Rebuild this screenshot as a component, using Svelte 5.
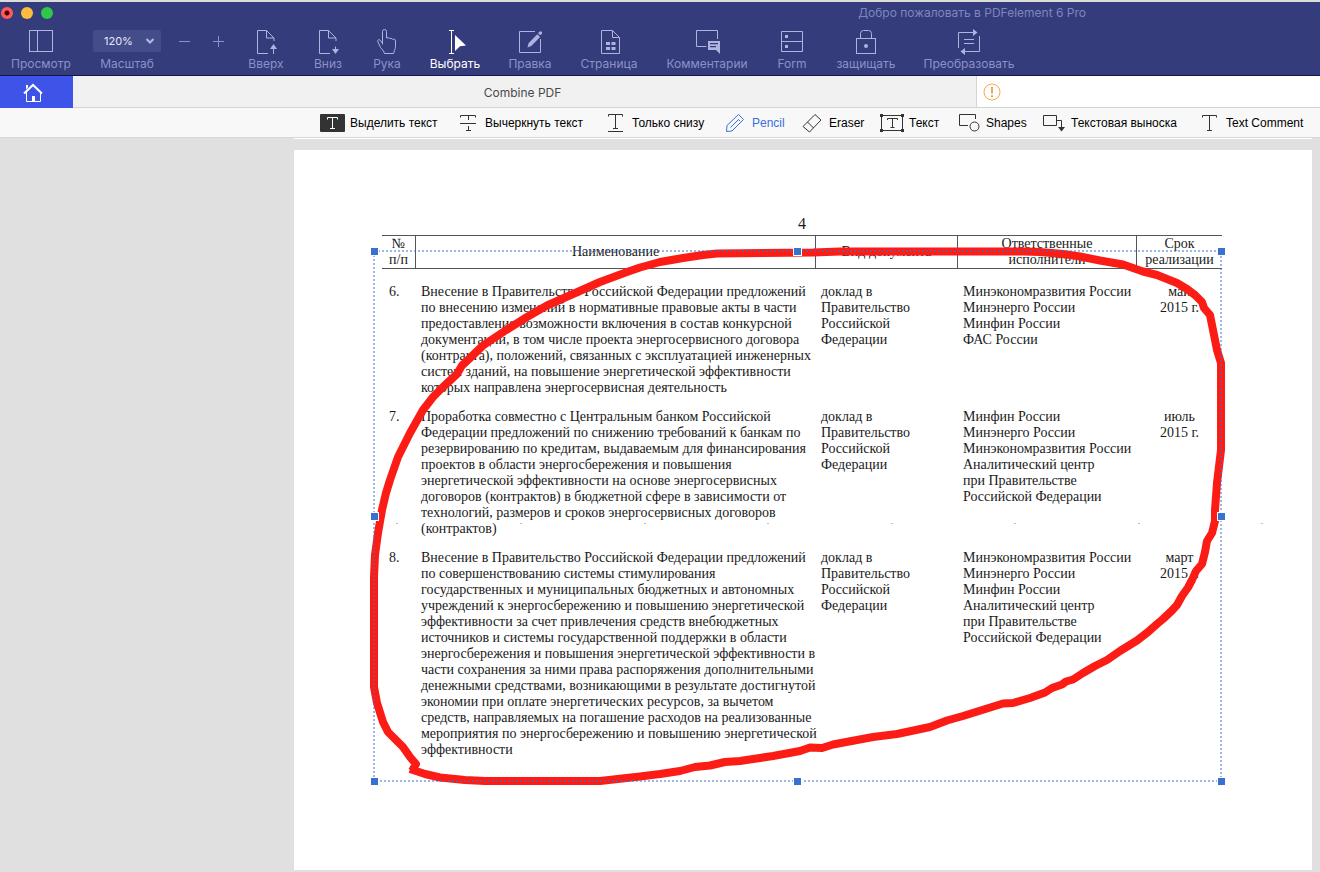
<script>
  const tools = [
    { id: 'up', label: 'Вверх' },
    { id: 'down', label: 'Вниз' },
    { id: 'hand', label: 'Рука' },
    { id: 'select', label: 'Выбрать' },
    { id: 'edit', label: 'Правка' },
    { id: 'page', label: 'Страница' },
    { id: 'comment', label: 'Комментарии' },
    { id: 'form', label: 'Form' },
    { id: 'protect', label: 'защищать' },
    { id: 'convert', label: 'Преобразовать' },
  ];

  const markups = [
    { id: 'highlight', label: 'Выделить текст' },
    { id: 'strike', label: 'Вычеркнуть текст' },
    { id: 'underline', label: 'Только снизу' },
    { id: 'pencil', label: 'Pencil' },
    { id: 'eraser', label: 'Eraser' },
    { id: 'textbox', label: 'Текст' },
    { id: 'shapes', label: 'Shapes' },
    { id: 'callout', label: 'Текстовая выноска' },
    { id: 'text', label: 'Text Comment' },
  ];

  const report = ['доклад в', 'Правительство', 'Российской', 'Федерации'];

  const rows = [
    {
      num: '6.',
      name: [
        'Внесение в Правительство Российской Федерации предложений',
        'по внесению изменений в нормативные правовые акты в части',
        'предоставления возможности включения в состав конкурсной',
        'документации, в том числе проекта энергосервисного договора',
        '(контракта), положений, связанных с эксплуатацией инженерных',
        'систем зданий, на повышение энергетической эффективности',
        'которых направлена энергосервисная деятельность',
      ],
      owners: ['Минэкономразвития России', 'Минэнерго России', 'Минфин России', 'ФАС России'],
      due: ['май', '2015 г.'],
    },
    {
      num: '7.',
      name: [
        'Проработка совместно с Центральным банком Российской',
        'Федерации предложений по снижению требований к банкам по',
        'резервированию по кредитам, выдаваемым для финансирования',
        'проектов в области энергосбережения и повышения',
        'энергетической эффективности на основе энергосервисных',
        'договоров (контрактов) в бюджетной сфере в зависимости от',
        'технологий, размеров и сроков энергосервисных договоров',
        '(контрактов)',
      ],
      owners: [
        'Минфин России',
        'Минэнерго России',
        'Минэкономразвития России',
        'Аналитический центр',
        'при Правительстве',
        'Российской Федерации',
      ],
      due: ['июль', '2015 г.'],
    },
    {
      num: '8.',
      name: [
        'Внесение в Правительство Российской Федерации предложений',
        'по совершенствованию системы стимулирования',
        'государственных и муниципальных бюджетных и автономных',
        'учреждений к энергосбережению и повышению энергетической',
        'эффективности за счет привлечения средств внебюджетных',
        'источников и системы государственной поддержки в области',
        'энергосбережения и повышения энергетической эффективности в',
        'части сохранения за ними права распоряжения дополнительными',
        'денежными средствами, возникающими в результате достигнутой',
        'экономии при оплате энергетических ресурсов, за вычетом',
        'средств, направляемых на погашение расходов на реализованные',
        'мероприятия по энергосбережению и повышению энергетической',
        'эффективности',
      ],
      owners: [
        'Минэкономразвития России',
        'Минэнерго России',
        'Минфин России',
        'Аналитический центр',
        'при Правительстве',
        'Российской Федерации',
      ],
      due: ['март', '2015 г.'],
    },
  ];

  // selection box of the pencil stroke, in page units
  const box = { x: 374, y: 251, w: 847, h: 530 };
  const handles = [
    [374, 251], [797, 251], [1221, 251],
    [374, 516], [1221, 516],
    [374, 781], [797, 781], [1221, 781],
  ];
  const specks = [397, 521, 645, 768, 892, 1015, 1139, 1262];

  let activeTool = $state('select');
  let activeMarkup = $state('pencil');
  let zoom = $state('120%');
</script>

{#snippet lines(list)}
  {#each list as line}<span class="line">{line}</span>{/each}
{/snippet}

{#snippet toolIcon(id)}
  <svg class="tool-icon" viewBox="0 0 28 28" aria-hidden="true">
    {#if id === 'view'}
      <rect x="2.5" y="3.5" width="23" height="21" />
      <path d="M10.5 3.5v21" />
    {:else if id === 'up'}
      <path d="M16 26.5H5.5v-23h9l7.500 7.500V14M14.500 3.500v7.500H22" />
      <path d="M21.500 20v7" />
      <path class="solid" d="M21.500 17l3.500 5h-7z" />
    {:else if id === 'down'}
      <path d="M16 26.5H5.5v-23h9l7.500 7.500V14M14.500 3.500v7.500H22" />
      <path d="M21.500 19.500v4" />
      <path class="solid" d="M21.500 27l3.500-5h-7z" />
    {:else if id === 'hand'}
      <path d="M9.500 17.500V4.500q0-2 2-2t2 2V11q1.500-1 3 .5 1.500-.8 3 .7 3-.7 3 1.800v5.500q0 2-1 4l-1 3H11.500l-1-2.500-3-3.500-2.500-5.500q-1-1.800.5-2.300 1.500-.3 2.300 1.300l1.700 2.500" />
    {:else if id === 'select'}
      <path d="M10.500 4v22M8 3.500h5M8 26.500h5" />
      <path class="solid" d="M14 8l11 10.500-6 .8-5 4.700z" />
    {:else if id === 'edit'}
      <path d="M19 4.500H3.500v21h21V12" />
      <path class="solid" d="M11.500 20.500l1-4.300 8.800-9 2.800 2.800-8.800 9zM22 6.300l1.500-1.500q1.200-1 2.200 0t.2 2l-1.500 1.500z" />
    {:else if id === 'page'}
      <path d="M6.500 3.500h11l7 7v16h-18zM17.500 3.500v7h7" />
      <path class="solid" d="M11 15h4v3h-4zM16.500 15h4v3h-4zM11 20h4v3h-4zM16.500 20h4v3h-4z" />
    {:else if id === 'comment'}
      <path d="M13.500 19.500h-10v-16h21V12" />
      <path class="solid" fill-rule="evenodd" d="M15 14h12v13l-4-4h-8zM17 16v1.300h8V16zM17 19v1.300h6V19z" />
    {:else if id === 'form'}
      <path d="M3.500 4.500h21v20h-21zM3.500 14.500h21" />
      <path class="solid" d="M7 8h3v3H7zM7 18h3v3H7z" />
    {:else if id === 'protect'}
      <rect x="4.500" y="11.500" width="19" height="15" />
      <path d="M8.500 11.500v-5q0-3 3-3h5q3 0 3 3v5" />
      <circle class="solid" cx="14" cy="19" r="2" />
    {:else if id === 'convert'}
      <path d="M3.500 21V5.500H19M24.500 9v15.500H9M9 12.500h10M9 16.500h10" />
      <path class="solid" d="M18 2l4.500 3.500L18 9zM10 21l-4.500 3.500L10 28z" />
    {/if}
  </svg>
{/snippet}

{#snippet markupIcon(id)}
  <svg class="markup-icon" viewBox="0 0 26 25" aria-hidden="true">
    {#if id === 'highlight'}
      <rect class="plate" x="0" y="4" width="25" height="18" rx="1" />
      <path class="on-plate" d="M7.500 9.500v-2h10v2M12.500 7.500v11M10 18.500h5" />
    {:else if id === 'strike'}
      <path d="M5.500 7.500v-2h15v2M13.500 5.500V10M5 13.500h16M13.500 16v4.500M11 20.500h5" />
    {:else if id === 'underline'}
      <path d="M6.500 6.500v-2h14v2M13.500 4.500v14M11 18.500h5M6 21.500h15" />
    {:else if id === 'pencil'}
      <path d="M4.500 21.500l.5-6L16.500 4.500l5 5L10 21zM8.500 17.500l8-8 1.500 1.500" />
    {:else if id === 'eraser'}
      <path d="M4 16.500L16 4.500l6 5.500L10.500 22zM8.500 12l6 6" />
    {:else if id === 'textbox'}
      <path d="M4 5.500h18M4 20.500h18M2.500 7v12M23.500 7v12" />
      <path class="solid" d="M1 4h3v3H1zM22 4h3v3h-3zM1 19h3v3H1zM22 19h3v3h-3z" />
      <path d="M8.500 10V8.500h10V10M13.500 8.500v9M11.500 17.500h4" />
    {:else if id === 'shapes'}
      <path d="M12 15.500H3.500v-11h16V9" />
      <circle cx="18.500" cy="16.500" r="4.500" />
    {:else if id === 'callout'}
      <path d="M2.500 5.500h13v10h-13zM15.500 10.500h5V17" />
      <path class="solid" d="M17 17h7l-3.500 4.500z" />
    {:else if id === 'text'}
      <path d="M6.500 7.500v-2h14v2M13.500 5.500v15M11 20.500h5" />
    {/if}
  </svg>
{/snippet}

<div class="app">
  <header class="chrome">
    <div class="titlebar">
      <div class="lights">
        <button class="light close" aria-label="Закрыть"></button>
        <button class="light minimize" aria-label="Свернуть"></button>
        <button class="light maximize" aria-label="Развернуть"></button>
      </div>
      <h1>Добро пожаловать в PDFelement 6 Pro</h1>
    </div>

    <div class="toolbar">
      <button class="tool">
        {@render toolIcon('view')}
        <span>Просмотр</span>
      </button>

      <div class="zoom">
        <div class="zoom-box">
          <select id="zoom" bind:value={zoom}>
            <option>100%</option>
            <option>120%</option>
            <option>150%</option>
          </select>
          <svg class="chevron" viewBox="0 0 10 8" aria-hidden="true"><path d="M1.500 2L5 5.500 8.500 2" /></svg>
        </div>
        <label for="zoom">Масштаб</label>
      </div>

      <div class="steps">
        <button aria-label="Уменьшить">
          <svg viewBox="0 0 11 11" aria-hidden="true"><path d="M0 5.500h11" /></svg>
        </button>
        <button aria-label="Увеличить">
          <svg viewBox="0 0 11 11" aria-hidden="true"><path d="M0 5.500h11M5.500 0v11" /></svg>
        </button>
      </div>

      <nav class="tools">
        {#each tools as tool}
          <button class="tool" class:active={activeTool === tool.id} onclick={() => (activeTool = tool.id)}>
            {@render toolIcon(tool.id)}
            <span>{tool.label}</span>
          </button>
        {/each}
      </nav>
    </div>
  </header>

  <div class="tabs">
    <button class="home" aria-label="Главная">
      <svg viewBox="0 0 20 20" aria-hidden="true">
        <path class="roof" d="M1 10.500l9-8.500 9 8.500" />
        <path d="M3.500 9v9.500h14V9" />
        <path class="solid" d="M9 13h3v6H9zM3 2h2v2.500l-2 2z" />
      </svg>
    </button>
    <button class="tab">Combine PDF</button>
    <div class="tab-alert">
      <svg viewBox="0 0 18 18" role="img" aria-label="Предупреждение">
        <circle cx="9" cy="9" r="8" />
        <path d="M9 4v6.500M9 12.300v1.700" />
      </svg>
    </div>
  </div>

  <div class="markup-bar">
    {#each markups as item}
      <button class="markup" class:current={activeMarkup === item.id} onclick={() => (activeMarkup = item.id)}>
        {@render markupIcon(item.id)}
        <span>{item.label}</span>
      </button>
    {/each}
  </div>

  <main class="workspace">
    <div class="page-end"></div>
    <article class="page">
      <div class="scan">
        <p class="page-number">4</p>
        <table>
          <colgroup>
            <col class="c-num" />
            <col class="c-name" />
            <col class="c-kind" />
            <col class="c-owner" />
            <col class="c-due" />
          </colgroup>
          <thead>
            <tr>
              <th>{@render lines(['№', 'п/п'])}</th>
              <th>Наименование</th>
              <th>Вид документа</th>
              <th>{@render lines(['Ответственные', 'исполнители'])}</th>
              <th>{@render lines(['Срок', 'реализации'])}</th>
            </tr>
          </thead>
          <tbody>
            {#each rows as row}
              <tr>
                <td class="num">{row.num}</td>
                <td>{@render lines(row.name)}</td>
                <td>{@render lines(report)}</td>
                <td>{@render lines(row.owners)}</td>
                <td class="due">{@render lines(row.due)}</td>
              </tr>
            {/each}
          </tbody>
        </table>

        <svg class="ink" viewBox="362 150 920 650" aria-hidden="true">
          {#each specks as x}
            <circle class="speck" cx={x} cy="523.500" r="0.600" />
          {/each}
          <path
            class="stroke"
            d="M410 769L425 774 440 777.500 465 780 485 781 600 781 640 776.500 660 774 680 771 695 767 710 765.500 725 762 740 761 773 756 800 751 810 747.500 822 748 833 744.500 873 737 897 734 930 727 947 720.500 963 716 987 708.500 1003 703.500 1013 703 1030 698 1045 692.500 1052 688 1062 684.500 1066 681.500 1073 679.500 1083 673 1095 666 1107 660 1120 651 1137 640.500 1148 632 1157 624 1163 619 1172 610.500 1177 605 1182 596 1188 587.500 1192 580 1196 571 1202 564 1205 552 1207 541 1212 533 1215 521 1215 510 1217 483 1221 450 1221 363 1217 350 1213 330 1210 315 1204 308 1202 302 1195 295 1187 289 1177 283 1157 275 1143 271.500 1123 264.500 1100 260.500 1080 256.500 1063 254 1040 252 1023 251.500 840 251.500 813 252.500 717 253.500 703 255 683 258 660 262 640 267.500 627 272 600 282 573 294 547 305.500 527 317 507 329.500 483 345.500 470 358 462 365.500 457 374 443 387 433 397 423 410 410 433 398 457 390 480 386 493 382 510 378 533 375 555 374 577 374 687 377 703 383 722 388 732 403 747 410 757 416 764 412 771"
          />
          <rect class="bounds" x={box.x} y={box.y} width={box.w} height={box.h} />
          {#each handles as [x, y]}
            <rect class="handle" x={x - 3.5} y={y - 3.5} width="8" height="8" />
          {/each}
        </svg>
      </div>
    </article>
  </main>
</div>

<style>
  :global(body) {
    background: #e0e0e0;
  }
  .app {
    min-height: 100vh;
    display: flex;
    flex-direction: column;
    font-family: Inter, 'Noto Sans', sans-serif;
    font-size: 12px;
    border-top: 2px solid #dcdcdc;
    box-sizing: border-box;
    overflow: hidden;
  }
  button,
  select {
    margin: 0;
    padding: 0;
    border: 0;
    background: none;
    font: inherit;
    color: inherit;
  }
  svg {
    display: block;
    fill: none;
    stroke: currentColor;
    stroke-width: 1;
  }
  .solid {
    fill: currentColor;
    stroke: none;
  }

  /* window chrome */
  .chrome {
    background: #343c7c;
    color: #8b91c9;
    border-bottom: 1px solid #12164f;
  }
  .titlebar {
    height: 22px;
    display: flex;
    align-items: center;
    justify-content: space-between;
    padding: 0 234px 0 1px;
  }
  .lights {
    display: flex;
    gap: 8px;
  }
  .light {
    width: 12px;
    height: 12px;
    border-radius: 50%;
  }
  .close {
    background: radial-gradient(circle, #4d0000 2px, #fc5b57 3px);
  }
  .minimize {
    background: #fdbc40;
  }
  .maximize {
    background: #2fc84a;
  }
  h1 {
    margin: 0;
    font-size: 12px;
    font-weight: 400;
    line-height: 16px;
    color: #7f86bf;
    white-space: nowrap;
  }
  .toolbar {
    display: flex;
    align-items: flex-start;
    padding: 3px 0;
  }
  .tool,
  .zoom {
    display: flex;
    flex-direction: column;
    align-items: center;
    gap: 1px;
    line-height: 16px;
    white-space: nowrap;
  }
  .tool {
    min-width: 82px;
  }
  .tool-icon {
    width: 28px;
    height: 28px;
    color: #aeb4de;
  }
  .tool.active,
  .tool.active .tool-icon {
    color: #fff;
  }
  .zoom {
    width: 68px;
    margin-left: 11px;
  }
  .zoom-box {
    position: relative;
    width: 68px;
    height: 22px;
    margin: 3px 0;
  }
  .zoom-box select {
    width: 100%;
    height: 22px;
    padding-left: 11px;
    appearance: none;
    border-radius: 2px;
    background: #444c89;
    color: #e6e8f7;
    font-size: 11px;
  }
  .chevron {
    position: absolute;
    right: 6px;
    top: 7px;
    width: 10px;
    height: 8px;
    color: #b5badf;
    stroke-width: 2;
    pointer-events: none;
  }
  .steps {
    display: flex;
    gap: 23px;
    padding: 9px 10px 0 18px;
  }
  .steps svg {
    width: 11px;
    height: 11px;
  }
  .tools {
    display: grid;
    grid-template-columns: 64px 60px 58px 78px 72px 86px 110px 60px 88px 118px;
  }
  .tools .tool {
    min-width: 0;
  }

  /* document tabs */
  .tabs {
    display: grid;
    grid-template-columns: 73px 903fr 344fr;
    height: 32px;
    background: #f1f1f1;
  }
  .home {
    display: flex;
    align-items: center;
    background: #3e54e8;
    color: #fff;
    padding: 2px 0 0 23px;
  }
  .home svg {
    width: 20px;
    height: 20px;
  }
  .roof {
    stroke-width: 2;
  }
  .tab {
    padding: 2px 4px 0 0;
    color: #4a4a4a;
    border-bottom: 1px solid #d4d4d4;
  }
  .tab-alert {
    display: flex;
    align-items: center;
    padding: 1px 0 0 6px;
    background: #fff;
    border-left: 1px solid #d4d4d4;
    border-bottom: 1px solid #d4d4d4;
    color: #f7a64f;
  }
  .tab-alert svg {
    width: 18px;
    height: 18px;
  }
  .tab-alert path {
    stroke-width: 2;
  }

  /* markup tools */
  .markup-bar {
    display: grid;
    grid-template-columns: 135px 147px 120px 77px 80px 77px 85px 155px 108px;
    justify-content: end;
    align-items: center;
    height: 29px;
    padding-right: 16px;
    background: #f8f8f8;
    border-bottom: 1px solid #d6d6d6;
    font-family: 'Liberation Sans', Arial, sans-serif;
    color: #000;
  }
  .markup {
    display: flex;
    align-items: center;
    gap: 4px;
    white-space: nowrap;
  }
  .markup-icon {
    flex: none;
    width: 26px;
    height: 25px;
    color: #333;
  }
  .markup.current,
  .markup.current .markup-icon {
    color: #3a6ee0;
  }
  .plate {
    fill: #333;
    stroke: none;
  }
  .on-plate {
    stroke: #fff;
  }

  /* document */
  .workspace {
    flex: 1;
    display: flex;
    flex-direction: column;
    gap: 11px;
    padding: 0 8px 2px 294px;
  }
  .page-end {
    height: 1px;
    background: #fff;
  }
  .page {
    flex: 1;
    background: #fff;
    padding-right: 2px;
  }
  .scan {
    position: relative;
    width: 840px;
    margin: 0 auto;
    padding: 66px 0 100px;
    font-family: 'Liberation Serif', 'Times New Roman', serif;
    font-size: 14px;
    line-height: 16px;
    color: #1a1a1a;
  }
  .page-number {
    margin: 0 0 3px;
    font-size: 16px;
    text-align: center;
  }
  table {
    width: 100%;
    table-layout: fixed;
    border-collapse: separate;
    border-spacing: 0;
  }
  .c-num {
    width: 34px;
  }
  .c-name {
    width: 400px;
  }
  .c-kind {
    width: 142px;
  }
  .c-owner {
    width: 179px;
  }
  th {
    height: 32px;
    padding: 0;
    font-weight: 400;
    border: 1px solid #555;
    border-width: 1px 1px 1px 0;
  }
  th:last-child {
    border-right: 0;
  }
  td {
    padding: 13px 0 0 5px;
    vertical-align: top;
    white-space: nowrap;
  }
  tbody tr:first-child td {
    padding-top: 15px;
  }
  .num {
    padding-left: 7px;
  }
  .due {
    padding-left: 0;
    text-align: center;
  }
  .line {
    display: block;
  }
  .ink {
    position: absolute;
    top: 0;
    left: -20px;
    width: 920px;
    height: 650px;
    pointer-events: none;
  }
  .speck {
    fill: #777;
    stroke: none;
  }
  .stroke {
    stroke: #fc1c16;
    stroke-width: 8;
    stroke-linejoin: round;
  }
  .bounds {
    stroke: #3a70cf;
    stroke-width: 1;
    stroke-dasharray: 2 2;
  }
  .handle {
    fill: #3a70cf;
    stroke: #fff;
  }
</style>
